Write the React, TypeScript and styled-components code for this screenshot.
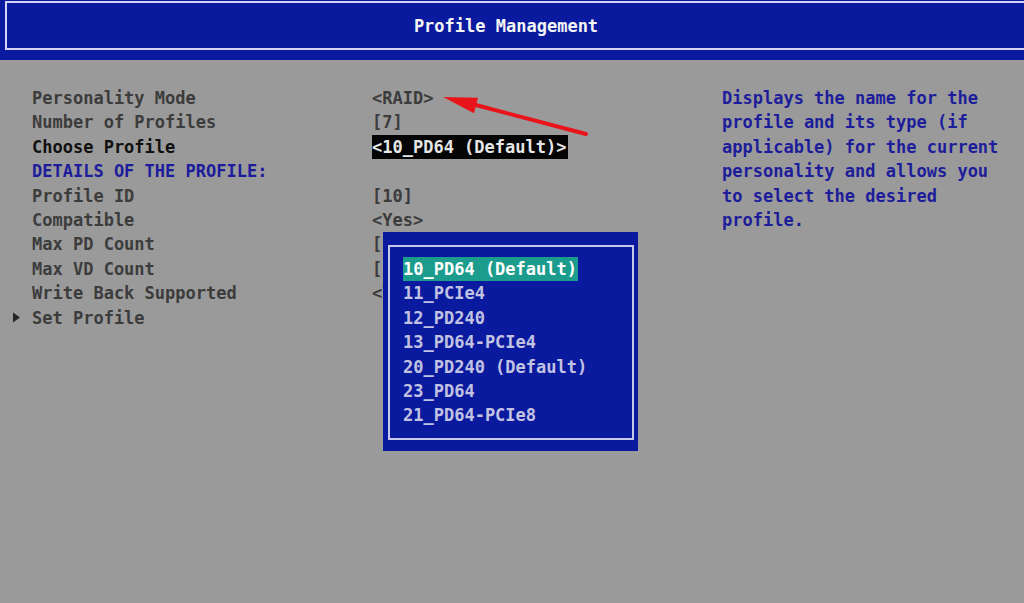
import React from 'react';
import styled, { createGlobalStyle } from 'styled-components';

const GlobalStyle = createGlobalStyle`
    html, body {
        margin: 0;
        padding: 0;
        background: #9a9a9a;
    }
    body {
        font-family: "DejaVu Sans Mono", "Liberation Mono", monospace;
        font-size: 17px;
        font-weight: bold;
    }
`;

const Screen = styled.div`
    position: relative;
    width: 1024px;
    height: 603px;
    overflow: hidden;
    background: #9a9a9a;
`;

const TitleBand = styled.div`
    height: 60px;
    background: #0a1a9e;
    padding: 1px 0 0 5px;
    box-sizing: border-box;
`;

const TitleFrame = styled.div`
    height: 49px;
    box-sizing: border-box;
    border: 2px solid #d4d4f2;
    border-right: none;
    display: flex;
    align-items: center;
    justify-content: center;
    padding-right: 19px;
    color: #f4f4f4;
`;

const Body = styled.div`
    display: flex;
    padding: 26px 0 0 12px;
`;

const Form = styled.div`
    width: 710px;
    display: flex;
    flex-direction: column;
`;

const Row = styled.div`
    display: grid;
    grid-template-columns: 20px 340px 1fr;
    align-items: center;
    height: 24.4px;
    line-height: 24.4px;
    white-space: pre;
`;

const Marker = styled.svg`
    display: block;
    margin-top: -1px;
`;

const Label = styled.span<{ $tone?: 'muted' | 'active' | 'section' }>`
    color: ${p => p.$tone === 'active' ? '#101010' : p.$tone === 'section' ? '#1c1c9c' : '#3c3c3c'};
`;

const Value = styled.span<{ $selected?: boolean }>`
    justify-self: start;
    color: ${p => p.$selected ? '#e6e6e6' : '#3c3c3c'};
    background: ${p => p.$selected ? '#050505' : 'transparent'};
    padding-right: ${p => p.$selected ? '2px' : '0'};
`;

const Help = styled.div`
    width: 290px;
    color: #1d1d9b;
    line-height: 24.4px;
`;

const Popup = styled.div`
    position: absolute;
    left: 383px;
    top: 232px;
    width: 255px;
    height: 219px;
    box-sizing: border-box;
    background: #0a1a9e;
    padding: 13px 4px 11px 5px;
`;

const PopupFrame = styled.div`
    height: 100%;
    box-sizing: border-box;
    border: 2px solid #c8c8ee;
    padding: 10px 0 0 13px;
    display: flex;
    flex-direction: column;
    align-items: flex-start;
`;

const Option = styled.div<{ $active?: boolean }>`
    height: 24.4px;
    line-height: 24.4px;
    white-space: pre;
    padding-right: 1px;
    color: ${p => p.$active ? '#ffffff' : '#c2c2e2'};
    background: ${p => p.$active ? '#1c9c8c' : 'transparent'};
`;

const Annotation = styled.svg`
    position: absolute;
    left: 0;
    top: 0;
    pointer-events: none;
`;

type Field = {
    label: string;
    value?: string;
    tone?: 'muted' | 'active' | 'section';
    selected?: boolean;
    submenu?: boolean;
};

const fields: Field[] = [
    { label: 'Personality Mode', value: '<RAID>' },
    { label: 'Number of Profiles', value: '[7]' },
    { label: 'Choose Profile', value: '<10_PD64 (Default)>', tone: 'active', selected: true },
    { label: 'DETAILS OF THE PROFILE:', tone: 'section' },
    { label: 'Profile ID', value: '[10]' },
    { label: 'Compatible', value: '<Yes>' },
    { label: 'Max PD Count', value: '[64]' },
    { label: 'Max VD Count', value: '[32]' },
    { label: 'Write Back Supported', value: '<Yes>' },
    { label: 'Set Profile', submenu: true },
];

const profiles = [
    '10_PD64 (Default)',
    '11_PCIe4',
    '12_PD240',
    '13_PD64-PCIe4',
    '20_PD240 (Default)',
    '23_PD64',
    '21_PD64-PCIe8',
];

const SubmenuArrow = () => <Marker width="9" height="11" viewBox="0 0 9 11">
    <polygon points="1,0.5 8,5.5 1,10.5" fill="#262626" />
</Marker>;

export default function App() {
    return <Screen>
        <GlobalStyle />
        <TitleBand>
            <TitleFrame>Profile Management</TitleFrame>
        </TitleBand>
        <Body>
            <Form>
                {fields.map(f => <Row key={f.label}>
                    {f.submenu ? <SubmenuArrow /> : <span />}
                    <Label $tone={f.tone}>{f.label}</Label>
                    {f.value ? <Value $selected={f.selected}>{f.value}</Value> : <span />}
                </Row>)}
            </Form>
            <Help>
                Displays the name for the<br />
                profile and its type (if<br />
                applicable) for the current<br />
                personality and allows you<br />
                to select the desired<br />
                profile.
            </Help>
        </Body>
        <Popup>
            <PopupFrame>
                {profiles.map((p, i) => <Option key={p} $active={i === 0}>{p}</Option>)}
            </PopupFrame>
        </Popup>
        <Annotation width="1024" height="603" viewBox="0 0 1024 603">
            <line x1="586" y1="134" x2="472" y2="104" stroke="#e8141a" strokeWidth="4" strokeLinecap="round" />
            <polygon points="443,97 478,97.8 474,113.2" fill="#e8141a" />
        </Annotation>
    </Screen>;
}
